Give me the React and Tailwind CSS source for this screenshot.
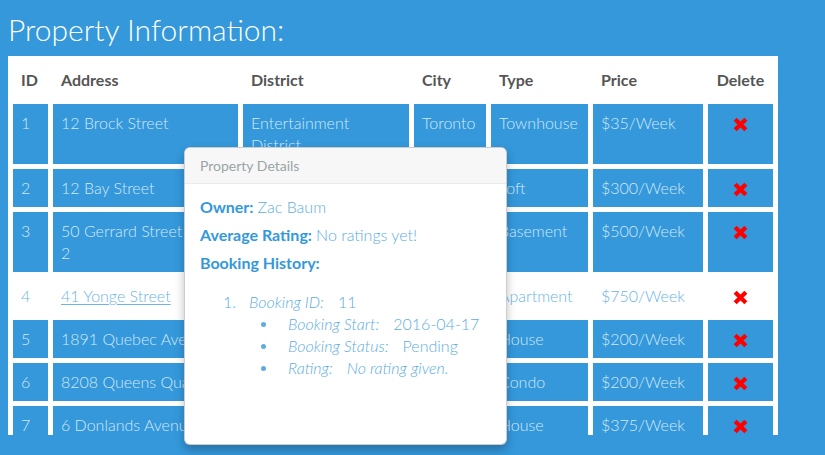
import React from "react";

const rows = [
  { id: 1, address: "12 Brock Street", district: "Entertainment District", city: "Toronto", type: "Townhouse", price: "$35/Week" },
  { id: 2, address: "12 Bay Street", district: "Financial", city: "Toronto", type: "Loft", price: "$300/Week" },
  { id: 3, address: ["50 Gerrard Street", "2"], district: "Downtown", city: "Toronto", type: "Basement", price: "$500/Week" },
  { id: 4, address: "41 Yonge Street", district: "Downtown", city: "Toronto", type: "Apartment", price: "$750/Week", active: true },
  { id: 5, address: "1891 Quebec Avenue", district: "Junction", city: "Toronto", type: "House", price: "$200/Week" },
  { id: 6, address: "8208 Queens Quay", district: "Harbourfront", city: "Toronto", type: "Condo", price: "$200/Week" },
  { id: 7, address: "6 Donlands Avenue", district: "East York", city: "Toronto", type: "House", price: "$375/Week" },
];

function RemoveIcon() {
  return (
    <svg width="15" height="15" viewBox="0 0 14 14" className="inline-block -mt-[2px]">
      <path d="M2 2 L12 12 M12 2 L2 12" stroke="#ff0000" strokeWidth="4" />
    </svg>
  );
}

function Cell({ active, className = "", children }) {
  return (
    <td
      className={`align-top px-2 py-2 leading-[22px] ${
        active ? "bg-white text-[#6cb4e5]" : "bg-[#3498db] text-[#d3e8f7]"
      } ${className}`}
    >
      {children}
    </td>
  );
}

export default function App() {
  return (
    <div className="relative h-[455px] w-full overflow-hidden bg-[#3498db] font-['Lato','Liberation_Sans',sans-serif]">
      {/* Title */}
      <h1 className="h-[56px] pt-[11px] pl-2 text-[30px] font-light leading-[36px] text-white">
        Property Information:
      </h1>

      {/* Table panel */}
      <div className="ml-2 h-[379px] w-[770px] overflow-hidden bg-white">
        <table className="w-[770px] table-fixed border-separate border-spacing-[5px] text-[16px] font-light">
          <thead>
            <tr className="text-left font-bold text-[#555555]">
              <th className="w-[35px] px-2 py-2 leading-[22px]">ID</th>
              <th className="w-[185px] px-2 py-2 leading-[22px]">Address</th>
              <th className="w-[166px] px-2 py-2 leading-[22px]">District</th>
              <th className="w-[72px] px-2 py-2 leading-[22px]">City</th>
              <th className="w-[97px] px-2 py-2 leading-[22px]">Type</th>
              <th className="w-[110px] px-2 py-2 leading-[22px]">Price</th>
              <th className="w-[65px] px-2 py-2 text-center leading-[22px]">Delete</th>
            </tr>
          </thead>
          <tbody>
            {rows.map((r) => (
              <tr key={r.id}>
                <Cell active={r.active}>{r.id}</Cell>
                <Cell active={r.active} className="whitespace-nowrap overflow-hidden">
                  {r.active ? (
                    <span className="underline underline-offset-2">{r.address}</span>
                  ) : Array.isArray(r.address) ? (
                    <>
                      {r.address[0]}
                      <br />
                      {r.address[1]}
                    </>
                  ) : (
                    r.address
                  )}
                </Cell>
                <Cell active={r.active}>{r.district}</Cell>
                <Cell active={r.active}>{r.city}</Cell>
                <Cell active={r.active}>{r.type}</Cell>
                <Cell active={r.active}>{r.price}</Cell>
                <Cell active={r.active} className="text-center">
                  <RemoveIcon />
                </Cell>
              </tr>
            ))}
          </tbody>
        </table>
      </div>

      {/* Popover */}
      <div className="absolute left-[184px] top-[147px] h-[298px] w-[323px] overflow-hidden rounded-md border border-black/20 bg-white shadow-[0_5px_10px_rgba(0,0,0,0.25)]">
        <div className="h-[36px] border-b border-[#ebebeb] bg-[#f7f7f7] px-[15px] text-[14px] leading-[35px] text-[#9aa5a6]">
          Property Details
        </div>
        <div className="px-[15px] pt-[9px] text-[16px] leading-[28px]">
          <div>
            <span className="font-bold text-[#3498db]">Owner:</span>{" "}
            <span className="font-light text-[#5dade2]">Zac Baum</span>
          </div>
          <div>
            <span className="font-bold text-[#3498db]">Average Rating:</span>{" "}
            <span className="font-light text-[#5dade2]">No ratings yet!</span>
          </div>
          <div className="font-bold text-[#3498db]">Booking History:</div>

          <div className="mt-[14px] text-[16px] font-light leading-[22px] text-[#5dade2]">
            <div className="flex pl-[23px]">
              <span className="w-[26px]">1.</span>
              <span>
                <em>Booking ID:</em>
                <span className="ml-[14px]">11</span>
              </span>
            </div>
            {[
              ["Booking Start:", "2016-04-17"],
              ["Booking Status:", "Pending"],
              ["Rating:", "No rating given."],
            ].map(([label, value]) => (
              <div key={label} className="flex items-center pl-[61px]">
                <span className="h-[5px] w-[5px] rounded-full bg-[#5dade2]" />
                <span className="ml-[22px]">
                  <em>{label}</em>
                  <span className={value === "No rating given." ? "ml-[14px] italic" : "ml-[14px]"}>{value}</span>
                </span>
              </div>
            ))}
          </div>
        </div>
      </div>
    </div>
  );
}
